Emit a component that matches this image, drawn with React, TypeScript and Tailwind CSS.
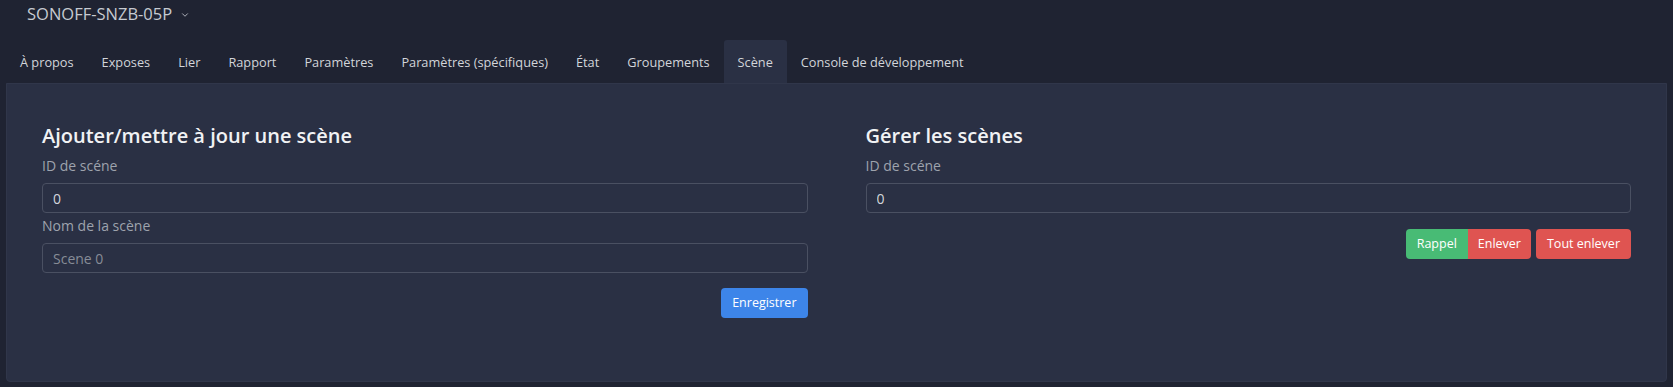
import { ChevronDown } from "lucide-react";

const tabs = [
  "À propos",
  "Exposes",
  "Lier",
  "Rapport",
  "Paramètres",
  "Paramètres (spécifiques)",
  "État",
  "Groupements",
  "Scène",
  "Console de développement",
];

const Field = ({ label, value, placeholder }: { label: string; value?: string; placeholder?: string }) => (
  <div className="flex flex-col">
    <label className="text-[14px] leading-[21px] text-[#9ea3ad]">{label}</label>
    <input
      readOnly
      value={value ?? ""}
      placeholder={placeholder}
      className="mt-[7px] h-[30px] w-full rounded-[4px] border border-[#4a5062] bg-transparent px-[10px] text-[14px] text-[#d3d6dc] outline-none placeholder:text-[#878c97]"
    />
  </div>
);

export default function App() {
  return (
    <div className="flex min-h-[387px] w-[1673px] flex-col bg-[#1f2332] font-['Open_Sans',sans-serif]">
      {/* Header */}
      <div className="flex h-[40px] items-start pl-[27px] pt-[1px]">
        <span className="text-[16.5px] leading-[26px] text-[#c6cad1]">SONOFF-SNZB-05P</span>
        <ChevronDown className="ml-[8px] mt-[9px] text-[#c6cad1]" size={10} strokeWidth={2} />
      </div>

      {/* Tabs */}
      <div className="flex h-[43px] pl-[6px]">
        {tabs.map((tab) => (
          <div
            key={tab}
            className={`flex items-center px-[14px] pt-[2px] text-[12.75px] text-[#d2d5da] ${
              tab === "Scène" ? "rounded-t-[3px] bg-[#2a3044]" : ""
            }`}
          >
            {tab}
          </div>
        ))}
      </div>

      {/* Panel */}
      <div className="mx-[6px] rounded-b-[4px] border border-[#30364a] bg-[#2a3044] px-[35px] pb-[63px] pt-[40px]">
        <div className="grid grid-cols-2 gap-[58px]">
          <div className="flex flex-col">
            <h2 className="text-[20px] font-semibold leading-[24px] text-[#f1f2f4]">
              Ajouter/mettre à jour une scène
            </h2>
            <div className="mt-[7px]">
              <Field label="ID de scéne" value="0" />
            </div>
            <div className="mt-[2px]">
              <Field label="Nom de la scène" placeholder="Scene 0" />
            </div>
            <div className="mt-[15px] flex justify-end">
              <button className="h-[30px] rounded-[4px] bg-[#3d85e9] px-[11px] text-[12.5px] text-white">
                Enregistrer
              </button>
            </div>
          </div>

          <div className="flex flex-col">
            <h2 className="text-[20px] font-semibold leading-[24px] text-[#f1f2f4]">Gérer les scènes</h2>
            <div className="mt-[7px]">
              <Field label="ID de scéne" value="0" />
            </div>
            <div className="mt-[16px] flex justify-end gap-[5px]">
              <div className="flex">
                <button className="h-[30px] rounded-l-[4px] bg-[#48bb75] px-[11px] text-[12.5px] text-white">
                  Rappel
                </button>
                <button className="h-[30px] rounded-r-[4px] bg-[#df5451] px-[10px] text-[12.5px] text-white">
                  Enlever
                </button>
              </div>
              <button className="h-[30px] rounded-[4px] bg-[#df5451] px-[11px] text-[12.5px] text-white">
                Tout enlever
              </button>
            </div>
          </div>
        </div>
      </div>
    </div>
  );
}
